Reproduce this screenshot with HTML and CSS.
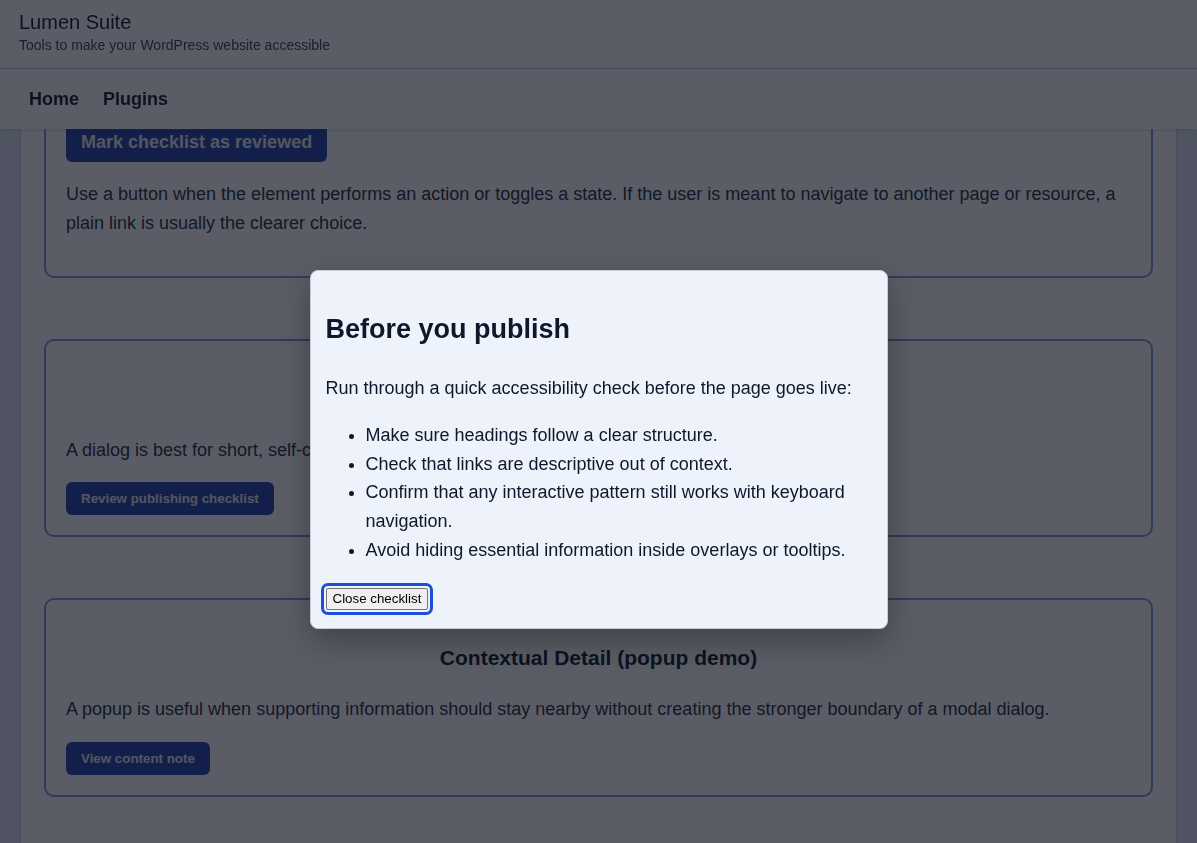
FILE: index.html
```html
<!DOCTYPE html>
<html lang="en">
<head>
    <meta charset="UTF-8">
    <meta name="viewport" content="width=device-width, initial-scale=1.0">
    <title>Lumen Suite - Interactive patterns</title>
    <link rel="stylesheet" href="styles.css">
</head>
<body>
    <div class="site-top">
        <header class="site-header">
            <div class="site-title">Lumen Suite</div>
            <div class="site-tagline">Tools to make your WordPress website accessible</div>
        </header>
        <nav class="site-nav">
            <a href="#">Home</a>
            <a href="#">Plugins</a>
        </nav>
    </div>

    <main class="content">
        <section class="demo-card">
            <h2>Review Status (button demo)</h2>
            <button class="action-btn large" type="button">Mark checklist as reviewed</button>
            <p>Use a button when the element performs an action or toggles a state. If the user is meant to navigate to another page or resource, a plain link is usually the clearer choice.</p>
        </section>

        <section class="demo-card">
            <h2>Publishing Checklist (dialog demo)</h2>
            <p>A dialog is best for short, self-contained tasks that need focused attention.</p>
            <button class="action-btn" type="button">Review publishing checklist</button>
        </section>

        <section class="demo-card">
            <h2>Contextual Detail (popup demo)</h2>
            <p>A popup is useful when supporting information should stay nearby without creating the stronger boundary of a modal dialog.</p>
            <button class="action-btn" type="button">View content note</button>
        </section>
    </main>

    <div class="backdrop"></div>
    <div class="dialog" role="dialog" aria-modal="true" aria-labelledby="dialog-title">
        <h2 id="dialog-title">Before you publish</h2>
        <p>Run through a quick accessibility check before the page goes live:</p>
        <ul>
            <li>Make sure headings follow a clear structure.</li>
            <li>Check that links are descriptive out of context.</li>
            <li>Confirm that any interactive pattern still works with keyboard navigation.</li>
            <li>Avoid hiding essential information inside overlays or tooltips.</li>
        </ul>
        <button class="close-btn is-focused" type="button">Close checklist</button>
    </div>
</body>
</html>
```

FILE: styles.css
```css
body {
    margin: 0;
    background-color: #dbe4f2;
    color: #1e293b;
    font-family: "Liberation Sans", Arial, sans-serif;
}

/* header stays pinned over the scrolled content */
.site-top {
    position: fixed;
    top: 0;
    left: 0;
    right: 0;
    z-index: 10;
    background-color: #fff;
    box-shadow: 0 2px 5px rgba(15, 23, 42, 0.12);
}

.site-header {
    padding: 10px 19px 15px;
    border-bottom: 1px solid #b4c5e6;
}

.site-title {
    font-size: 20px;
    line-height: 24px;
    color: #0f172a;
}

.site-tagline {
    margin-top: 3px;
    font-size: 14px;
    line-height: 16px;
    color: #334155;
}

.site-nav {
    display: flex;
    gap: 4px;
    height: 60px;
    align-items: center;
    padding: 0 19px;
}

.site-nav a {
    padding: 8px 10px;
    font-size: 18px;
    font-weight: bold;
    color: #0f172a;
    text-decoration: none;
}

.content {
    display: flex;
    flex-direction: column;
    gap: 61px;
    margin: 0 20px;
    padding: 25px 23px 90px;
    background-color: #fff;
    border-left: 1px solid #cfd6e2;
    border-right: 1px solid #cfd6e2;
}

.demo-card {
    padding: 20px;
    border: 2px solid #7896e4;
    border-radius: 10px;
}

.demo-card h2 {
    margin: 24px 0 23px;
    font-size: 21px;
    line-height: 28px;
    text-align: center;
    color: #0f172a;
}

.demo-card p {
    margin: 18px 0;
    font-size: 18px;
    line-height: 1.6;
}

.action-btn {
    display: inline-block;
    align-self: flex-start;
    padding: 8.5px 15px;
    border: none;
    border-radius: 6px;
    background-color: #1e3fa8;
    color: #e2e8f0;
    font-family: "Liberation Sans", Arial, sans-serif;
    font-size: 13.33px;
    font-weight: bold;
    line-height: 16px;
    cursor: pointer;
}

.action-btn.large {
    padding: 10px 15px;
    font-size: 18px;
    line-height: 20px;
}

/* modal */
.backdrop {
    position: fixed;
    inset: 0;
    z-index: 100;
    background-color: rgba(14, 16, 30, 0.68);
}

.dialog {
    position: fixed;
    top: 270px;
    left: 50%;
    z-index: 101;
    box-sizing: border-box;
    width: 578px;
    transform: translateX(-50%);
    padding: 16px 16px 18px 15px;
    background-color: #eef2fb;
    border: 1px solid #c7ccd6;
    border-radius: 8px;
    box-shadow: 0 12px 32px rgba(0, 0, 0, 0.3);
    color: #0f172a;
}

.dialog h2 {
    margin: 26px 0 29px;
    font-size: 27px;
    line-height: 32px;
}

.dialog p {
    margin: 0;
    font-size: 18px;
    line-height: 1.6;
}

.dialog ul {
    margin: 18px 0 23px;
    padding-left: 40px;
    font-size: 18px;
    line-height: 1.6;
}

.close-btn {
    display: block;
    padding: 2px 6px;
    border: 1px solid #767676;
    border-radius: 2px;
    background-color: #efefef;
    color: #000;
    font-family: "Liberation Sans", Arial, sans-serif;
    font-size: 13.33px;
    line-height: 16px;
}

.close-btn:focus,
.close-btn.is-focused {
    outline: 3px solid #1d4ed8;
    outline-offset: 2px;
}
```
